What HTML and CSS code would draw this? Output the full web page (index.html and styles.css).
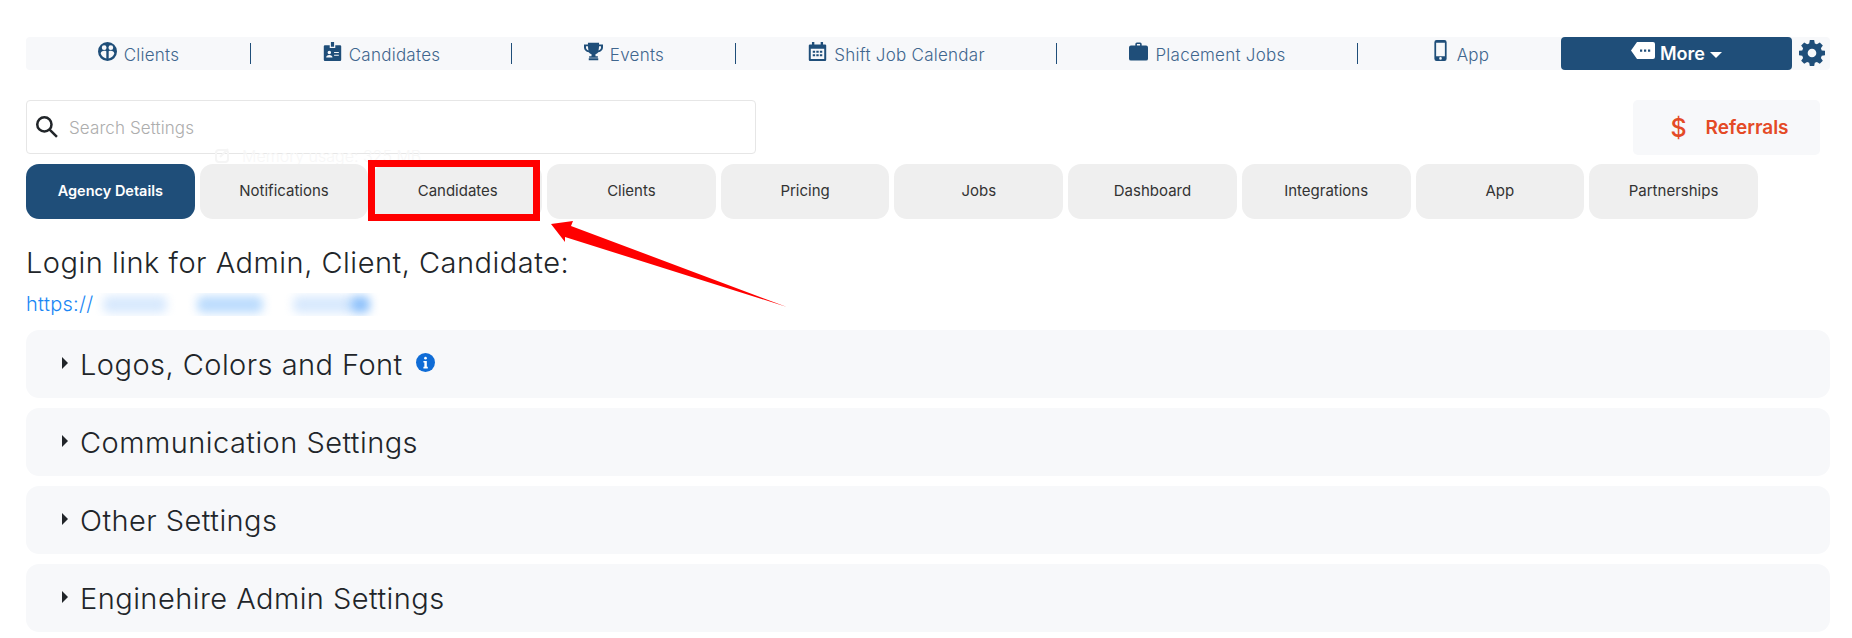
FILE: index.html
```html
<!DOCTYPE html>
<html lang="en">
<head>
<meta charset="utf-8">
<title>Settings</title>
<link rel="stylesheet" href="styles.css">
</head>
<body>
<main class="page">
  <nav class="topnav">
    <a class="nav-item w1"><svg class="ic" viewBox="0 0 24 24"><path fill-rule="evenodd" d="M12 0a12 12 0 1 0 0 24 12 12 0 0 0 0-24zM7.800 4.200a3 3 0 1 1 0 6 3 3 0 0 1 0-6zm8.400 0a3 3 0 1 1 0 6 3 3 0 0 1 0-6zM3.400 14.500c.3-2 2-3.400 4.400-3.400 1 0 1.900.2 2.700.6v9c-3.300-.5-6.100-3.100-7.100-6.200zm10.100 6.200v-9c.8-.4 1.700-.6 2.700-.6 2.400 0 4.100 1.400 4.400 3.400-1 3.100-3.800 5.700-7.100 6.200z"/></svg><span>Clients</span></a>
    <a class="nav-item w2"><svg class="ic" viewBox="0 0 24 24"><path fill-rule="evenodd" d="M10 0h4v6h-4zM2.500 4H8.500v3.500h7V4h6A1.500 1.500 0 0 1 23 5.500v17a1.500 1.500 0 0 1-1.500 1.500h-19A1.500 1.500 0 0 1 1 22.500v-17A1.500 1.500 0 0 1 2.500 4zM8 11a2.200 2.200 0 1 0 0 4.400A2.200 2.200 0 0 0 8 11zm-4 8.500h8c0-2-1.500-3.200-4-3.200s-4 1.200-4 3.200zM14 12.500V14h6v-1.500zm0 3.500v1.500h6V16z"/></svg><span>Candidates</span></a>
    <a class="nav-item w3"><svg class="ic" viewBox="0 0 24 22"><path fill-rule="evenodd" d="M5 0h14v2h5v4c0 3-2.500 5.500-6 6-.8 1.200-2 2-3.500 2.400V17h3v2h-11v-2h3v-2.600C8 14 6.800 13.200 6 12 2.500 11.500 0 9 0 6V2h5zM2.500 4.500V6c0 1.600 1.200 3 3.200 3.700C5.300 8 5 6.200 5 4.500zm16.500 0c0 1.700-.3 3.500-.7 5.200 2-.7 3.200-2.100 3.200-3.700V4.500zM6 19.500h12V22H6z"/></svg><span>Events</span></a>
    <a class="nav-item w4"><svg class="ic" viewBox="0 0 24 24"><path fill-rule="evenodd" d="M5 0h3v3h8V0h3v3h2.500A1.500 1.500 0 0 1 23 4.500v18a1.500 1.500 0 0 1-1.500 1.500h-19A1.500 1.500 0 0 1 1 22.500v-18A1.500 1.500 0 0 1 2.500 3H5zM3.500 8.500V21.500h17V8.500zM6 11h3v2.500H6zm4.500 0h3v2.500h-3zm4.500 0h3v2.500h-3zM6 15.500h3V18H6zm4.500 0h3V18h-3zm4.500 0h3V18h-3z"/></svg><span>Shift Job Calendar</span></a>
    <a class="nav-item w5"><svg class="ic" viewBox="0 0 24 23"><path fill-rule="evenodd" d="M8 4V2a2 2 0 0 1 2-2h4a2 2 0 0 1 2 2v2h5.500A2.500 2.500 0 0 1 24 6.500v14a2.500 2.500 0 0 1-2.500 2.500h-19A2.500 2.500 0 0 1 0 20.500v-14A2.500 2.500 0 0 1 2.500 4zm2-2v2h4V2z"/></svg><span>Placement Jobs</span></a>
    <a class="nav-item w6"><svg class="ic phone" viewBox="0 0 14 24"><path fill-rule="evenodd" d="M2.500 0h9A2.500 2.500 0 0 1 14 2.500v19a2.500 2.500 0 0 1-2.500 2.500h-9A2.500 2.500 0 0 1 0 21.500v-19A2.500 2.500 0 0 1 2.500 0zM2 3v15.500h10V3zm5 16.500a1.500 1.500 0 1 0 0 3 1.500 1.500 0 0 0 0-3z"/></svg><span>App</span></a>
    <a class="nav-more"><svg class="ic tag" viewBox="0 0 24 17"><path fill-rule="evenodd" d="M6 0h16a2 2 0 0 1 2 2v13a2 2 0 0 1-2 2H6L0 8.500zM9 7.500v2.200h2.200V7.500zm4 0v2.200h2.200V7.500zm4 0v2.200h2.200V7.500z"/></svg><span>More</span><i class="caret"></i></a>
    <svg class="gear" viewBox="0 0 24 24"><path fill-rule="evenodd" d="M10 0h4l.6 3.200 1.900.8L19.200 2.200 22 5l-1.800 2.700.8 1.900 3 .4v4l-3 .6-.8 1.900 1.800 2.700-2.800 2.800-2.700-1.800-1.900.8L14 24h-4l-.6-3-1.900-.8L4.800 22 2 19.200l1.800-2.700-.8-1.900L0 14v-4l3-.4.8-1.900L2 5l2.800-2.800L7.500 4l1.900-.8zM12 8a4 4 0 1 0 0 8 4 4 0 0 0 0-8z"/></svg>
  </nav>

  <section class="tools">
    <label class="search">
      <svg class="search-ic" viewBox="0.500 0.500 21 21"><circle cx="8.500" cy="8.500" r="6.800"/><path d="M13.500 13.500L20.500 20.500"/></svg>
      <span class="placeholder">Search Settings</span>
    </label>
    <a class="referrals"><span class="dollar">$</span><span>Referrals</span></a>
  </section>

  <div class="tabs-wrap">
    <span class="ghost"><svg class="ghost-ic" viewBox="0 0 16 16"><rect x="1" y="2" width="12" height="12" rx="3"/><path d="M5 9l8-8"/></svg>Memory usage: 325 MB</span>
    <ul class="tabs">
      <li class="tab active">Agency Details</li>
      <li class="tab">Notifications</li>
      <li class="tab">Candidates</li>
      <li class="tab">Clients</li>
      <li class="tab">Pricing</li>
      <li class="tab">Jobs</li>
      <li class="tab">Dashboard</li>
      <li class="tab">Integrations</li>
      <li class="tab">App</li>
      <li class="tab">Partnerships</li>
    </ul>
    <div class="callout"></div>
    <svg class="arrow" viewBox="551 220 240 90"><path d="M551 224L573 221 571 226 787 307 565 237 565 242z"/></svg>
  </div>

  <h2 class="login-title">Login link for Admin, Client, Candidate:</h2>
  <p class="login-link"><a>https://</a><span class="blur"><i class="b1"></i><i class="b2"></i><i class="b3"></i><i class="b4"></i></span></p>

  <div class="accordion">
    <div class="acc"><i class="tri"></i><span>Logos, Colors and Font</span><svg class="info" viewBox="0 0 20 20"><circle cx="10" cy="10" r="10"/><rect class="info-d" x="8.600" y="4" width="2.800" height="2.800" rx="1.400"/><path class="info-d" d="M7.800 8.400h3.600v6.200h1v1.600H7.800v-1.600h1v-4.600h-1z"/></svg></div>
    <div class="acc"><i class="tri"></i><span>Communication Settings</span></div>
    <div class="acc"><i class="tri"></i><span>Other Settings</span></div>
    <div class="acc"><i class="tri"></i><span>Enginehire Admin Settings</span></div>
  </div>
</main>
</body>
</html>
```
FILE: styles.css
```css
* { box-sizing: border-box; }
html, body { margin: 0; padding: 0; background: #fff; }
body { font-family: "Inter", "Noto Sans", sans-serif; color: #212529; overflow: hidden; height: 638px; }
.page { padding: 37px 22px 0 26px; width: 1852px; }

.topnav { display: flex; align-items: stretch; width: 1804px; height: 33px; background: #f7f8fa; border-radius: 4px; }
.nav-item { display: flex; align-items: center; justify-content: center; gap: 7px; padding-top: 2px; color: #3f668e; font-size: 17px; font-weight: 300; letter-spacing: .25px; position: relative; }
.nav-item::after { content: ""; position: absolute; right: 0; top: 6px; height: 21px; width: 1px; background: #1f4e79; }
.nav-item.w6::after { display: none; }
.w1 { width: 225px; } .w2 { width: 261px; } .w3 { width: 224px; } .w4 { width: 321px; } .w5 { width: 301px; } .w6 { width: 203px; padding-left: 4px; }
.ic { width: 19px; height: 19px; fill: #1f4e79; margin-top: -7px; flex: none; }
.ic.phone { width: 13px; height: 21px; margin-right: 3px; margin-top: -8px; }
.nav-more { width: 231px; background: #1f4e79; color: #fff; border-radius: 4px; display: flex; align-items: center; justify-content: center; gap: 5px; font-size: 18px; font-weight: 600; }
.ic.tag { width: 24px; height: 17px; fill: #fff; margin-top: -7px; }
.caret { width: 0; height: 0; border-left: 6px solid transparent; border-right: 6px solid transparent; border-top: 6px solid #fff; margin-top: 3px; }
.gear { width: 26px; height: 26px; fill: #1f4e79; margin: 3px 0 0 7px; }

.tools { display: flex; justify-content: space-between; align-items: flex-start; margin-top: 30px; width: 1794px; }
.search { display: flex; align-items: center; gap: 11px; width: 730px; height: 54px; border: 1px solid #e6e6e6; border-radius: 4px; padding: 2px 0 0 9px; background: #fff; }
.search-ic { width: 22px; height: 22px; margin-top: -2px; fill: none; stroke: #212529; stroke-width: 2.400; }
.placeholder { color: #adadad; font-size: 17px; font-weight: 300; letter-spacing: .1px; }
.referrals { display: flex; align-items: center; justify-content: center; gap: 19px; width: 187px; height: 55px; padding-left: 6px; background: #f7f8fa; border-radius: 5px; color: #e44a26; font-size: 19px; font-weight: 600; }
.dollar { font-size: 25px; font-weight: 500; }

.tabs-wrap { position: relative; margin-top: 9px; }
.ghost { position: absolute; left: 189px; top: -18px; display: flex; align-items: center; gap: 11px; font-size: 16px; font-weight: 300; color: #f7f7f7; }
.ghost-ic { width: 16px; height: 16px; fill: none; stroke: #f5f5f5; stroke-width: 2; }
.tabs { list-style: none; margin: 0; padding: 0; display: flex; gap: 5px; position: relative; }
.tab { width: 168.700px; height: 55px; padding-bottom: 2px; background: #efefef; border-radius: 13px; display: flex; align-items: center; justify-content: center; font-size: 15px; font-weight: 400; color: #333; }
.tab.active { background: #1f4e79; color: #fff; font-weight: 600; font-size: 14.500px; }
.callout { position: absolute; left: 342px; top: -4px; width: 172px; height: 61px; border: 7px solid #f00; }
.arrow { position: absolute; left: 525px; top: 56px; width: 240px; height: 90px; fill: #f00; }

.login-title { margin: 26px 0 0; font-size: 29px; font-weight: 300; letter-spacing: .5px; line-height: 36px; }
.login-link { margin: 11px 0 0; height: 24px; display: flex; align-items: center; font-size: 20px; font-weight: 300; letter-spacing: .3px; color: #1a86f5; }
.blur { position: relative; width: 286px; height: 23px; margin-left: 1px; overflow: hidden; background: #fff; }
.blur i { position: absolute; top: 3px; height: 17px; filter: blur(5px); border-radius: 6px; }
.b1 { left: 8px; width: 64px; background: #d8e9fd; }
.b2 { left: 102px; width: 66px; background: #bcdcfd; }
.b3 { left: 198px; width: 60px; background: #d8e9fd; }
.b4 { left: 255px; width: 20px; background: #8fc2fb; }

.accordion { margin-top: 14px; display: flex; flex-direction: column; gap: 10px; width: 1804px; }
.acc { height: 68px; background: #f7f8fa; border-radius: 13px; display: flex; align-items: center; padding-left: 36px; font-size: 29px; font-weight: 300; letter-spacing: .45px; color: #212529; }
.tri { width: 0; height: 0; border-top: 6px solid transparent; border-bottom: 6px solid transparent; border-left: 6px solid #212529; margin: -3px 12px 0 0; }
.info { width: 19px; height: 19px; fill: #0f6cd6; margin: -3px 0 0 13px; }
.info-d { fill: #fff; }
```
